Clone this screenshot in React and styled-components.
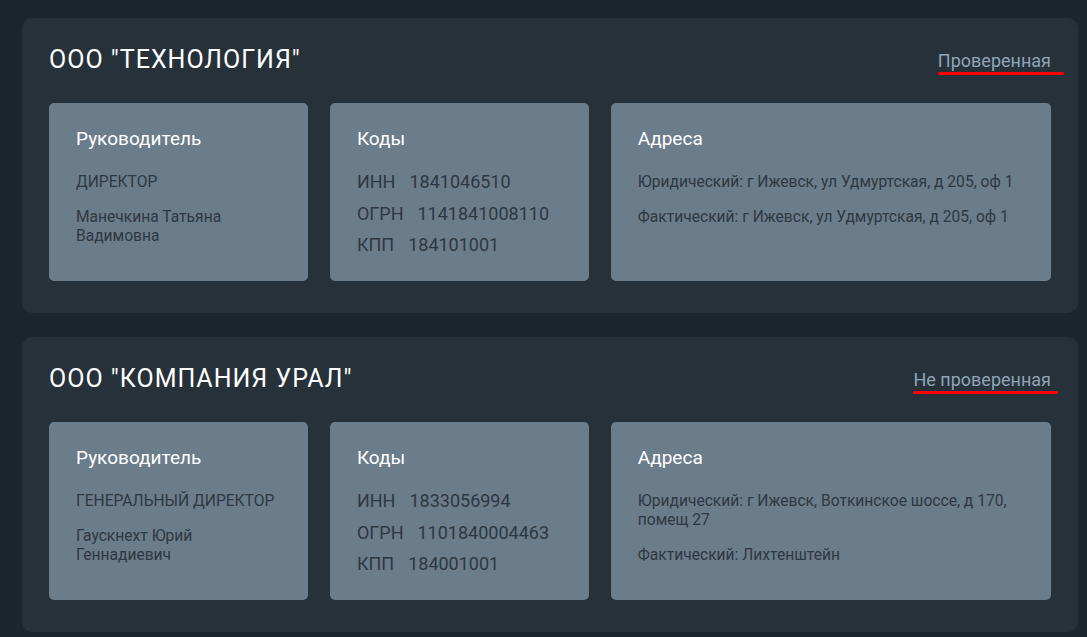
import styled, { createGlobalStyle } from "styled-components";

const GlobalStyle = createGlobalStyle`
  html, body {
    margin: 0;
    background: #1e262d;
    font-family: Roboto, "Noto Sans", "Liberation Sans", sans-serif;
  }
`;

const companies = [
  {
    name: 'ООО "ТЕХНОЛОГИЯ"',
    status: "Проверенная",
    extra: 13,
    post: "ДИРЕКТОР",
    person: "Манечкина Татьяна Вадимовна",
    inn: "1841046510",
    ogrn: "1141841008110",
    kpp: "184101001",
    legal: "г Ижевск, ул Удмуртская, д 205, оф 1",
    actual: "г Ижевск, ул Удмуртская, д 205, оф 1",
  },
  {
    name: 'ООО "КОМПАНИЯ УРАЛ"',
    status: "Не проверенная",
    extra: 7,
    post: "ГЕНЕРАЛЬНЫЙ ДИРЕКТОР",
    person: "Гаускнехт Юрий Геннадиевич",
    inn: "1833056994",
    ogrn: "1101840004463",
    kpp: "184001001",
    legal: "г Ижевск, Воткинское шоссе, д 170, помещ 27",
    actual: "Лихтенштейн",
  },
];

const CompanyCard = ({ c }) => (
  <Panel>
    <Header>
      <Title>{c.name}</Title>
      <Status $extra={c.extra}>{c.status}</Status>
    </Header>
    <Cards>
      <Card>
        <CardTitle>Руководитель</CardTitle>
        <Text>{c.post}</Text>
        <Text $narrow>{c.person}</Text>
      </Card>
      <Card>
        <CardTitle>Коды</CardTitle>
        <Codes>
          <Code><span>ИНН</span>{c.inn}</Code>
          <Code><span>ОГРН</span>{c.ogrn}</Code>
          <Code><span>КПП</span>{c.kpp}</Code>
        </Codes>
      </Card>
      <Card>
        <CardTitle>Адреса</CardTitle>
        <Text>Юридический: {c.legal}</Text>
        <Text>Фактический: {c.actual}</Text>
      </Card>
    </Cards>
  </Panel>
);

export default function App() {
  return (
    <>
      <GlobalStyle />
      <Page>
        {companies.map((c) => (
          <CompanyCard key={c.name} c={c} />
        ))}
      </Page>
    </>
  );
}

const Page = styled.div`
  display: flex;
  flex-direction: column;
  gap: 24px;
  padding: 18px 9px 6px 22px;
`;

const Panel = styled.section`
  background: #27313a;
  border-radius: 10px;
  padding: 28px 27px 32px;
`;

const Header = styled.div`
  display: flex;
  justify-content: space-between;
  align-items: center;
  height: 28px;
  margin-bottom: 29px;
`;

const Title = styled.h2`
  margin: 0;
  font-size: 25px;
  line-height: 28px;
  letter-spacing: 1px;
  font-weight: 400;
  color: #fff;
`;

const Status = styled.a`
  position: relative;
  font-size: 18px;
  line-height: 20px;
  color: #8fa5b7;
  margin-top: 2px;
  cursor: pointer;

  &::after {
    content: "";
    position: absolute;
    left: 0;
    bottom: -4px;
    width: calc(100% + ${(p) => p.$extra}px);
    height: 3.5px;
    border-radius: 2px;
    background: #ff0000;
  }
`;

const Cards = styled.div`
  display: grid;
  grid-template-columns: 1fr 1fr 1.7fr;
  gap: 22px;
`;

const Card = styled.div`
  background: #6b7c8a;
  border-radius: 5px;
  min-height: 178px;
  box-sizing: border-box;
  padding: 25px 27px 14px;
  display: flex;
  flex-direction: column;
  align-items: flex-start;
`;

const CardTitle = styled.h3`
  margin: 0 0 23px;
  font-size: 19px;
  line-height: 22px;
  font-weight: 400;
  color: #fff;
`;

const Text = styled.p`
  margin: 0;
  max-width: ${(p) => (p.$narrow ? "160px" : "none")};
  font-size: 15.6px;
  line-height: 19px;
  color: #2e3842;

  & + & {
    margin-top: 16px;
  }
`;

const Codes = styled.div`
  margin-top: -7px;
  display: flex;
  flex-direction: column;
`;

const Code = styled.div`
  font-size: 18px;
  line-height: 31.5px;
  color: #2e3842;

  span {
    margin-right: 14px;
  }
`;
